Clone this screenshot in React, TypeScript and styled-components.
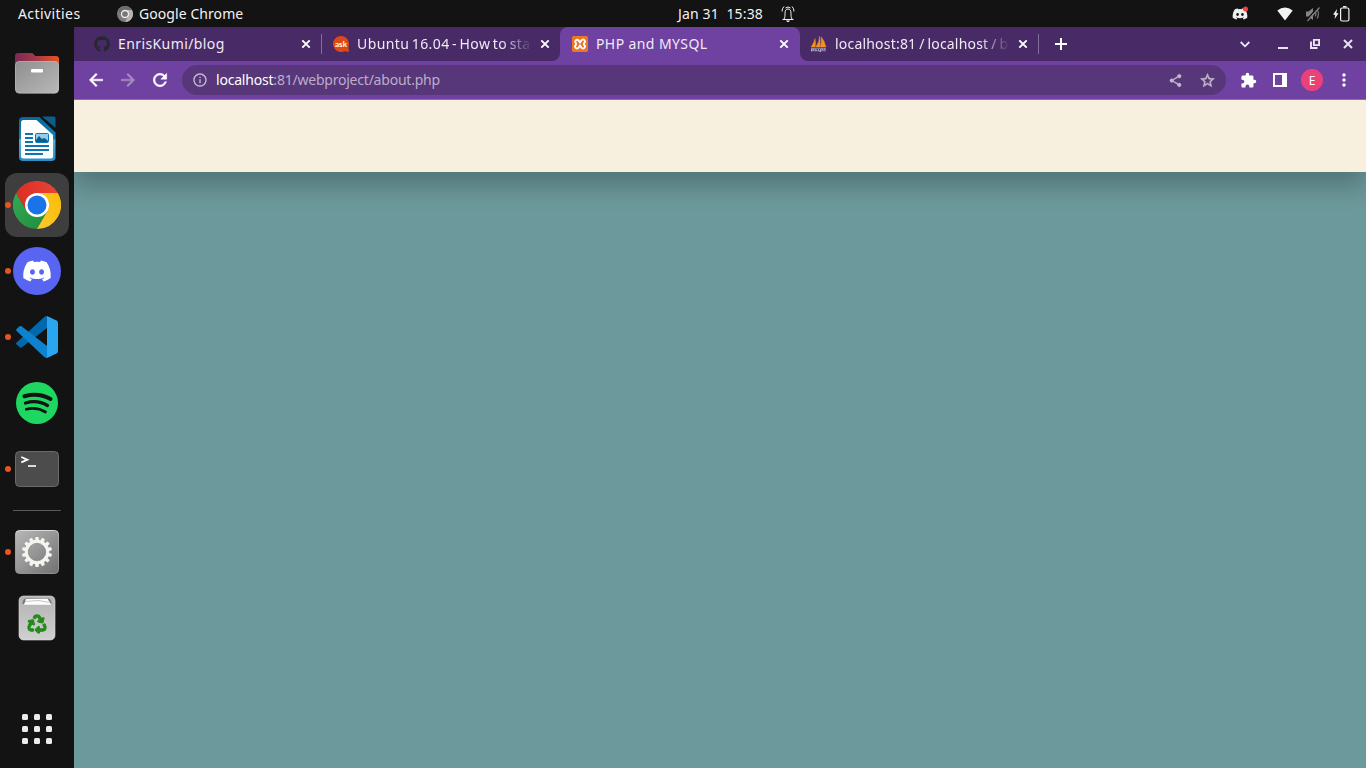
import React from 'react';
import styled, { createGlobalStyle } from 'styled-components';
import { FaGithub, FaDiscord, FaRecycle } from 'react-icons/fa';
import {
  MdArrowBack, MdArrowForward, MdRefresh, MdInfoOutline, MdShare, MdStarBorder,
  MdExtension, MdMoreVert,
} from 'react-icons/md';

const Global = createGlobalStyle`
  * { box-sizing: border-box; }
  body { margin: 0; overflow: hidden; background: #131313; }
  svg { display: block; flex: none; }
`;

const Desktop = styled.div`
  width: 1366px;
  height: 768px;
  display: flex;
  flex-direction: column;
  background: #131313;
  font-family: "Noto Sans", "Open Sans", sans-serif;
  color: #f2f2f2;
`;

const TopBar = styled.header`
  height: 27px;
  flex: none;
  display: grid;
  grid-template-columns: 678px 1fr 134px;
  align-items: center;
`;

const BarGroup = styled.div`
  display: flex;
  align-items: center;
  height: 27px;
`;

const Label = styled.span<{ $spacing?: number; $width?: number; $color?: string }>`
  font-size: 14px;
  letter-spacing: ${p => p.$spacing ?? 0}px;
  width: ${p => (p.$width ? `${p.$width}px` : 'auto')};
  color: ${p => p.$color ?? '#f2f2f2'};
  line-height: 20px;
  white-space: pre;
  flex: none;
`;

const Gap = styled.div<{ $w: number }>`
  width: ${p => p.$w}px;
  flex: none;
`;

const Body = styled.div`
  flex: 1;
  display: flex;
  min-height: 0;
`;

const Dock = styled.nav`
  width: 74px;
  flex: none;
  display: flex;
  flex-direction: column;
  padding: 14px 5px 5px;
`;

const DockItem = styled.div<{ $active?: boolean }>`
  width: 64px;
  height: 64px;
  margin-bottom: 2px;
  flex: none;
  border-radius: 12px;
  background: ${p => (p.$active ? '#3e3e3e' : 'transparent')};
  display: flex;
  align-items: center;
  justify-content: center;
  position: relative;
`;

const Running = styled.i`
  position: absolute;
  left: 0;
  top: 29px;
  width: 6px;
  height: 6px;
  border-radius: 50%;
  background: #e95420;
`;

const Separator = styled.hr`
  width: 48px;
  height: 1px;
  margin: 7px 8px 9px;
  border: 0;
  background: #585858;
  flex: none;
`;

const DockSpacer = styled.div`
  flex: 1;
`;

const AppsGrid = styled.div`
  display: grid;
  grid-template-columns: repeat(3, 6px);
  gap: 6px;
`;

const AppsDot = styled.i`
  width: 6px;
  height: 6px;
  border-radius: 1.5px;
  background: #ececec;
`;

const Browser = styled.main`
  flex: 1;
  min-width: 0;
  display: flex;
  flex-direction: column;
`;

const TabStrip = styled.div`
  height: 34px;
  flex: none;
  display: flex;
  background: #6f42a1;
`;

const TabGroup = styled.div<{ $width?: number; $side: 'left' | 'right' }>`
  width: ${p => (p.$width ? `${p.$width}px` : 'auto')};
  flex: ${p => (p.$width ? 'none' : '1')};
  display: flex;
  align-items: center;
  background: #472a66;
  border-radius: ${p => (p.$side === 'left' ? '0 0 8px 0' : '0 0 0 8px')};
`;

const TabSlot = styled.div`
  width: 240px;
  flex: none;
  background: linear-gradient(#472a66 50%, #6f42a1 50%);
`;

const ActiveTab = styled.div`
  height: 34px;
  background: #6f42a1;
  border-radius: 8px 8px 0 0;
  display: flex;
  align-items: center;
  padding-left: 12px;
`;

const TabTitle = styled.span<{ $width: number; $spacing: number; $word?: number; $fade?: boolean }>`
  width: ${p => p.$width}px;
  flex: none;
  overflow: hidden;
  white-space: pre;
  font-size: 14px;
  line-height: 20px;
  letter-spacing: ${p => p.$spacing}px;
  word-spacing: ${p => p.$word ?? 0}px;
  color: #f0ebf5;
  mask-image: ${p => (p.$fade ? 'linear-gradient(to right, #000 calc(100% - 30px), transparent)' : 'none')};
`;

const TabDivider = styled.i`
  width: 1px;
  height: 20px;
  background: #836b9a;
  flex: none;
`;

const Toolbar = styled.div`
  height: 39px;
  flex: none;
  display: flex;
  align-items: center;
  background: #6f42a1;
  border-bottom: 1px solid #9068b9;
  padding-left: 12px;
`;

const BoldIcon = styled.span`
  display: flex;
  flex: none;
  path:not([fill="none"]) { stroke: currentColor; stroke-width: 0.6px; }
`;

const Address = styled.div`
  width: 1044px;
  height: 30px;
  flex: none;
  border-radius: 15px;
  background: #573679;
  display: flex;
  align-items: center;
  padding: 0 10px;
`;

const Avatar = styled.div`
  width: 22px;
  height: 22px;
  flex: none;
  border-radius: 50%;
  background: #ec407a;
  display: flex;
  align-items: center;
  justify-content: center;
  font-size: 12px;
  color: #fff;
`;

const Page = styled.section`
  flex: 1;
  background: #6c999b;
  overflow: hidden;
`;

const Banner = styled.div`
  height: 72px;
  background: #f7f0de;
  box-shadow: 0 15px 22px rgba(0, 0, 0, 0.22);
`;

function ChromeIcon() {
  return (
    <svg width="48" height="48" viewBox="0 0 48 48">
      <defs>
        <linearGradient id="cr" x1="0" x2="1"><stop stopColor="#d93025" /><stop offset="1" stopColor="#ea4335" /></linearGradient>
        <linearGradient id="cg" x1="0" y1="0" x2="1" y2="1"><stop stopColor="#34a853" /><stop offset="1" stopColor="#1e8e3e" /></linearGradient>
        <linearGradient id="cy" x1="0" y1="1" x2="1" y2="0"><stop stopColor="#fcc934" /><stop offset="1" stopColor="#fbbc04" /></linearGradient>
      </defs>
      <path d="M24 24 L13.6 30 L3.2 12 A24 24 0 0 0 24 48 L34.4 30 Z" fill="url(#cg)" />
      <path d="M24 12 H44.8 A24 24 0 0 1 24 48 L34.4 30 Z" fill="url(#cy)" />
      <path d="M24 12 H44.8 A24 24 0 0 0 3.2 12 L13.6 30 Z" fill="url(#cr)" />
      <circle cx="24" cy="24" r="12" fill="#fff" />
      <circle cx="24" cy="24" r="9.5" fill="#1a73e8" />
    </svg>
  );
}

function MonoChromeIcon() {
  return (
    <svg width="16" height="16" viewBox="0 0 48 48">
      <circle cx="24" cy="24" r="24" fill="#7c7c7c" />
      <path d="M3.2 12 A24 24 0 0 1 44.8 12 H24 L13.6 30Z" fill="#6c6c6c" />
      <path d="M24 48 A24 24 0 0 0 44.8 12 H24 L34.4 30Z" fill="#b5b5b5" />
      <circle cx="24" cy="24" r="12.5" fill="#eee" />
      <circle cx="24" cy="24" r="8.5" fill="#777" />
    </svg>
  );
}

function FilesIcon() {
  return (
    <svg width="48" height="48" viewBox="0 0 48 48">
      <defs>
        <linearGradient id="fb" x1="0" x2="1"><stop stopColor="#7d2853" /><stop offset=".5" stopColor="#a83a49" /><stop offset="1" stopColor="#e95420" /></linearGradient>
        <linearGradient id="ff" x1="0" y1="0" x2="1" y2="1"><stop stopColor="#8e8e8e" /><stop offset="1" stopColor="#b9b9b9" /></linearGradient>
      </defs>
      <path d="M2 22V7a3 3 0 0 1 3-3h13.500q1.500 0 2.500 1.500l1 1.500H43a3 3 0 0 1 3 3v14z" fill="url(#fb)" />
      <rect x="2" y="12" width="44" height="32.500" rx="4.500" fill="url(#ff)" />
      <rect x="2.500" y="12.500" width="43" height="31.500" rx="4" fill="none" stroke="#c4c4c4" strokeOpacity=".45" />
      <rect x="18" y="20" width="12" height="3.500" rx="1" fill="#fff" />
    </svg>
  );
}

function WriterIcon() {
  return (
    <svg width="48" height="48" viewBox="0 0 48 48">
      <defs>
        <linearGradient id="wr" x1="0" y1="0" x2="0" y2="1"><stop stopColor="#0b6698" /><stop offset=".5" stopColor="#1781bb" /><stop offset=".52" stopColor="#4fb0dc" /><stop offset="1" stopColor="#2590c7" /></linearGradient>
      </defs>
      <path d="M10 2h16.500L42.500 17.500V42a4 4 0 0 1-4 4H10a4 4 0 0 1-4-4V6a4 4 0 0 1 4-4z" fill="url(#wr)" />
      <path d="M10.500 5h13L40 20v21.500a2 2 0 0 1-2 2H10.500A2.500 2.500 0 0 1 8 41V7.500A2.500 2.500 0 0 1 10.500 5z" fill="#fff" />
      <path d="M29 1.500h12A1.500 1.500 0 0 1 42.500 3v10z" fill="#0d5d8c" />
      <path d="M12 19h8M12 23h8M12 27h8M12 31h24M12 35h24M12 39h18" stroke="#0c76b4" strokeWidth="2" />
      <rect x="22.500" y="18.500" width="13" height="9" rx="1" fill="#92cdea" stroke="#0c76b4" />
      <path d="M23 27v-2l3-4 3 3 2-1 2 1 2 2v1z" fill="#0c5c8e" />
    </svg>
  );
}

function CodeIcon() {
  return (
    <svg width="42" height="42" viewBox="0 0 42 42">
      <path d="M31 0v12L5.500 31.500Q4.500 32 3.500 31L.6 28.500q-1-1 0-2L28 1.200Q29.500 0 31 0z" fill="#0069ae" />
      <path d="M31 42V30L5.500 10.300Q4.500 9.500 3.500 10.300L.6 13q-1 1 0 2L28 40.800Q29.500 42 31 42z" fill="#0d83cf" />
      <path d="M31 0l9.500 4.500Q42 5.300 42 7v28q0 1.700-1.500 2.500L31 42z" fill="#2aa5ef" />
    </svg>
  );
}

const DiscordDisc = styled.div`
  width: 48px;
  height: 48px;
  border-radius: 50%;
  background: #5865f2;
  display: flex;
  align-items: center;
  justify-content: center;
`;

function DiscordIcon() {
  return (
    <DiscordDisc>
      <FaDiscord size={30} color="#fff" />
    </DiscordDisc>
  );
}

function SpotifyIcon() {
  return (
    <svg width="42" height="42" viewBox="0 0 42 42">
      <circle cx="21" cy="21" r="21" fill="#1ed760" />
      <g fill="none" stroke="#131313" strokeLinecap="round">
        <path d="M8.500 14.200Q22.500 10.500 34.500 17" strokeWidth="4" />
        <path d="M9.500 21Q21.500 17.500 31.500 23.500" strokeWidth="3.300" />
        <path d="M10.300 27.300Q20.500 24.600 29.500 30" strokeWidth="2.700" />
      </g>
    </svg>
  );
}

function TerminalIcon() {
  return (
    <svg width="48" height="48" viewBox="0 0 48 48">
      <rect x="2.500" y="6.500" width="43" height="35" rx="4" fill="#4c4c4c" stroke="#6a6a6a" />
      <path d="M8.300 12l6 2.700-6 2.700" fill="none" stroke="#fff" strokeWidth="1.900" />
      <path d="M15 21h8" stroke="#fff" strokeWidth="1.600" />
    </svg>
  );
}

function SettingsIcon() {
  const teeth = Array.from({ length: 14 }, (_, i) => (i * 360) / 14);
  return (
    <svg width="48" height="48" viewBox="0 0 48 48">
      <defs>
        <linearGradient id="st" x1="0" y1="0" x2="1" y2="1"><stop stopColor="#b8b8b8" /><stop offset="1" stopColor="#717171" /></linearGradient>
        <linearGradient id="sb" x1="0" y1="0" x2="0" y2="1"><stop stopColor="#dadada" /><stop offset=".15" stopColor="#a8a8a8" /><stop offset="1" stopColor="#8f8f8f" /></linearGradient>
      </defs>
      <rect x="2.500" y="2.500" width="43" height="43" rx="4" fill="url(#st)" stroke="url(#sb)" />
      <circle cx="24" cy="24" r="10.400" fill="none" stroke="#f5f4f0" strokeWidth="3.600" />
      {teeth.map(a => (
        <path key={a} d="M21.900 13l.6-4h3l.6 4z" fill="#f5f4f0" transform={`rotate(${a} 24 24)`} />
      ))}
      <circle cx="24" cy="24" r="8.700" fill="none" stroke="#666" strokeWidth=".6" />
    </svg>
  );
}

function TrashIcon() {
  return (
    <svg width="48" height="48" viewBox="0 0 48 48">
      <defs>
        <linearGradient id="tr" x1="0" y1="0" x2="0" y2="1"><stop stopColor="#b2b2b2" /><stop offset="1" stopColor="#d0d0d0" /></linearGradient>
      </defs>
      <rect x="6" y="2" width="36" height="44" rx="4.500" fill="url(#tr)" stroke="#dedede" strokeWidth=".6" />
      <path d="M9.500 10q0-5.500 4-5.500h21q4 0 4 5.500z" fill="#777" />
      <path d="M11 10.800l2-5.800 21.500-.3 3.500 5.600v.5z" fill="#fff" />
      <path d="M12 7.500l14-1 10 2" fill="none" stroke="#aaa" strokeWidth=".7" />
      <FaRecycle x="14.500" y="20.500" size={19} color="#258a1b" strokeWidth="30" stroke="#258a1b" />
    </svg>
  );
}

function BellIcon() {
  return (
    <svg width="14" height="18" viewBox="0 0 14 18" fill="none" stroke="#f2f2f2">
      <path d="M1.500 14.500h11M3 14c1-1.500 1-3 1-5.500C4 5.500 5 4 7 4s3 1.500 3 4.500c0 2.500 0 4 1 5.500M4.500 3Q7 1 9.500 3M3 1.500Q1 3.500 1 6.500M11 1.500q2 2 2 5" />
      <path d="M5 15.500h4L7.800 17H6.200z" fill="#f2f2f2" stroke="none" />
    </svg>
  );
}

function TrayDiscord() {
  return (
    <svg width="17" height="16" viewBox="0 0 17 16">
      <FaDiscord x="0" y="0" size={16} color="#eee" />
      <circle cx="13.500" cy="3" r="2.500" fill="#ed4245" />
    </svg>
  );
}

function WifiIcon() {
  return (
    <svg width="16" height="14" viewBox="0 0 16 14">
      <path d="M.3 3.600Q8-2.500 15.700 3.600L8 13.500z" fill="#f2f2f2" />
    </svg>
  );
}

function MutedIcon() {
  return (
    <svg width="16" height="16" viewBox="0 0 16 16">
      <path d="M1 5.500h2.500L8 2v12l-4.500-3.500H1z" fill="#858585" />
      <path d="M10 5.500q2 2.500 0 5M12 3.500q3 4.500 0 9" fill="none" stroke="#777" strokeWidth="1.200" />
      <path d="M13 1L1.500 14" stroke="#131313" strokeWidth="1.300" />
      <path d="M14.500 1.500L2.500 15" stroke="#858585" strokeWidth="1.200" />
    </svg>
  );
}

function BatteryIcon() {
  return (
    <svg width="17" height="16" viewBox="0 0 17 16">
      <path d="M4 3L0 8.800h2.200L1.600 13 5.600 7.200H3.400z" fill="#f2f2f2" />
      <rect x="7.600" y="2" width="8.300" height="13" rx="1.500" fill="none" stroke="#f2f2f2" strokeWidth="1.200" />
      <path d="M10 .8h3.500" stroke="#f2f2f2" strokeWidth="1.500" />
    </svg>
  );
}

function AskIcon() {
  return (
    <svg width="16" height="16" viewBox="0 0 16 16">
      <path d="M8 0a8 8 0 1 0 3.500 15.200L16 16l-.6-5A8 8 0 0 0 8 0z" fill="#dd4814" />
      <text x="2" y="10.500" fontFamily="Lato, sans-serif" fontWeight="700" fontSize="8" textLength="12" lengthAdjust="spacingAndGlyphs" fill="#fff">ask</text>
    </svg>
  );
}

function XamppIcon() {
  return (
    <svg width="16" height="16" viewBox="0 0 16 16">
      <rect width="16" height="16" rx="1.500" fill="#ee7623" />
      <path d="M5 3.700a2 2 0 0 0-1 3.600v1.400a2 2 0 1 0 2.800 2.600L8 9.700l1.200 1.600A2 2 0 1 0 12 8.700V7.300A2 2 0 1 0 9.200 4.700L8 6.300 6.800 4.700A2 2 0 0 0 5 3.700z" fill="none" stroke="#fff" strokeWidth="1.900" />
    </svg>
  );
}

function SailIcon() {
  return (
    <svg width="17" height="16" viewBox="0 0 17 16">
      <path d="M1 11Q4 7 5 2.500q1 4 .2 8.500zM5.700 11Q9.500 6 9.500 0q1.200 5 .5 11zM10.300 11q1.700-4 .8-10.300 3.900 4.300 4.900 10.300z" fill="#f29126" stroke="#f29126" strokeWidth=".4" />
      <path d="M1 12.300h14.500" stroke="#8580a8" />
      <path d="M1.500 15.500V13h2v1.500h-2M5 15.500v-3m0 1.500h2v1.500M8.500 13v2h2v-2m0 1.500V16M12 15.500v-3l1.500 2 1.500-2v3" fill="none" stroke="#b8b2cf" strokeWidth=".9" />
    </svg>
  );
}

function TabClose() {
  return (
    <svg width="14" height="14" viewBox="0 0 14 14"><path d="M3.300 3.300l7.400 7.400M10.700 3.300l-7.400 7.400" stroke="#fff" strokeWidth="1.900" /></svg>
  );
}

function NewTabIcon() {
  return (
    <svg width="18" height="18" viewBox="0 0 18 18"><path d="M9 3v12M3 9h12" stroke="#fff" strokeWidth="2" /></svg>
  );
}

function ChevronIcon() {
  return (
    <svg width="10" height="7" viewBox="0 0 10 7"><path d="M.7 1L5 5.300 9.300 1" fill="none" stroke="#eee8f3" strokeWidth="1.800" /></svg>
  );
}

function MinimizeIcon() {
  return (
    <svg width="10" height="10" viewBox="0 0 10 10"><path d="M0 9h10" stroke="#e9e4ef" strokeWidth="2" /></svg>
  );
}

function RestoreIcon() {
  return (
    <svg width="10" height="10" viewBox="0 0 10 10" fill="none" stroke="#e9e4ef">
      <path d="M3.900.9h5.200v5.200h-5.200z" strokeWidth="1.900" />
      <path d="M1 2.500V9h6.500" strokeWidth="1.900" />
    </svg>
  );
}

function WindowCloseIcon() {
  return (
    <svg width="10" height="10" viewBox="0 0 10 10"><path d="M1 1l8 8M9 1L1 9" stroke="#e9e4ef" strokeWidth="2" /></svg>
  );
}

function SidePanelIcon() {
  return (
    <svg width="14" height="14" viewBox="0 0 14 14"><path d="M0 0h14v14H0zM2 2v10h7V2z" fill="#fff" fillRule="evenodd" /></svg>
  );
}

const dockTop = [
  { name: 'files', icon: <FilesIcon /> },
  { name: 'writer', icon: <WriterIcon /> },
  { name: 'chrome', icon: <ChromeIcon />, running: true, active: true },
  { name: 'discord', icon: <DiscordIcon />, running: true },
  { name: 'code', icon: <CodeIcon />, running: true },
  { name: 'spotify', icon: <SpotifyIcon /> },
  { name: 'terminal', icon: <TerminalIcon />, running: true },
];

export default function App() {
  return (
    <Desktop>
      <Global />
      <TopBar>
        <BarGroup>
          <Gap $w={18} />
          <Label $width={99} $spacing={0.42}>Activities</Label>
          <MonoChromeIcon />
          <Gap $w={6} />
          <Label $spacing={0.07}>Google Chrome</Label>
        </BarGroup>
        <BarGroup>
          <Label $width={103} $spacing={0.15}>Jan 31  15:38</Label>
          <BellIcon />
        </BarGroup>
        <BarGroup>
          <TrayDiscord />
          <Gap $w={28} />
          <WifiIcon />
          <Gap $w={12} />
          <MutedIcon />
          <Gap $w={12} />
          <BatteryIcon />
        </BarGroup>
      </TopBar>
      <Body>
        <Dock>
          {dockTop.map(d => (
            <DockItem key={d.name} $active={d.active}>
              {d.running && <Running />}
              {d.icon}
            </DockItem>
          ))}
          <Separator />
          <DockItem><Running /><SettingsIcon /></DockItem>
          <DockItem><TrashIcon /></DockItem>
          <DockSpacer />
          <DockItem>
            <AppsGrid>{Array.from({ length: 9 }, (_, i) => <AppsDot key={i} />)}</AppsGrid>
          </DockItem>
        </Dock>
        <Browser>
          <TabStrip>
            <TabGroup $side="left" $width={486}>
              <Gap $w={20} />
              <FaGithub size={16} color="#24292e" />
              <Gap $w={8} />
              <TabTitle $width={181} $spacing={0.4}>EnrisKumi/blog</TabTitle>
              <TabClose />
              <Gap $w={8} />
              <TabDivider />
              <Gap $w={11} />
              <AskIcon />
              <Gap $w={8} />
              <TabTitle $width={175} $spacing={0.4} $word={-1.5} $fade>Ubuntu 16.04 - How to sta</TabTitle>
              <Gap $w={6} />
              <TabClose />
            </TabGroup>
            <TabSlot>
              <ActiveTab>
                <XamppIcon />
                <Gap $w={8} />
                <TabTitle $width={181} $spacing={0.4}>PHP and MYSQL</TabTitle>
                <TabClose />
              </ActiveTab>
            </TabSlot>
            <TabGroup $side="right">
              <Gap $w={10} />
              <SailIcon />
              <Gap $w={8} />
              <TabTitle $width={175} $spacing={0.2} $word={-1} $fade>localhost:81 / localhost / b</TabTitle>
              <Gap $w={6} />
              <TabClose />
              <Gap $w={8} />
              <TabDivider />
              <Gap $w={13} />
              <NewTabIcon />
              <Gap $w={170} />
              <ChevronIcon />
              <Gap $w={28} />
              <MinimizeIcon />
              <Gap $w={22} />
              <RestoreIcon />
              <Gap $w={23} />
              <WindowCloseIcon />
            </TabGroup>
          </TabStrip>
          <Toolbar>
            <BoldIcon><MdArrowBack size={20} color="#fff" /></BoldIcon>
            <Gap $w={12} />
            <BoldIcon><MdArrowForward size={20} color="#a78ac4" /></BoldIcon>
            <Gap $w={12} />
            <BoldIcon><MdRefresh size={20} color="#fff" /></BoldIcon>
            <Gap $w={12} />
            <Address>
              <MdInfoOutline size={16} color="#c9bdd4" />
              <Gap $w={8} />
              <Label $color="#fff" $spacing={-0.2}>localhost</Label>
              <Label $width={895} $spacing={-0.22} $color="#bcaecb">:81/webproject/about.php</Label>
              <BoldIcon><MdShare size={15} color="#c4b9cc" /></BoldIcon>
              <Gap $w={16} />
              <BoldIcon><MdStarBorder size={17} color="#c4b9cc" /></BoldIcon>
            </Address>
            <Gap $w={14} />
            <MdExtension size={17} color="#fff" />
            <Gap $w={16} />
            <SidePanelIcon />
            <Gap $w={14} />
            <Avatar>E</Avatar>
            <Gap $w={11} />
            <MdMoreVert size={20} color="#fff" />
          </Toolbar>
          <Page><Banner /></Page>
        </Browser>
      </Body>
    </Desktop>
  );
}
